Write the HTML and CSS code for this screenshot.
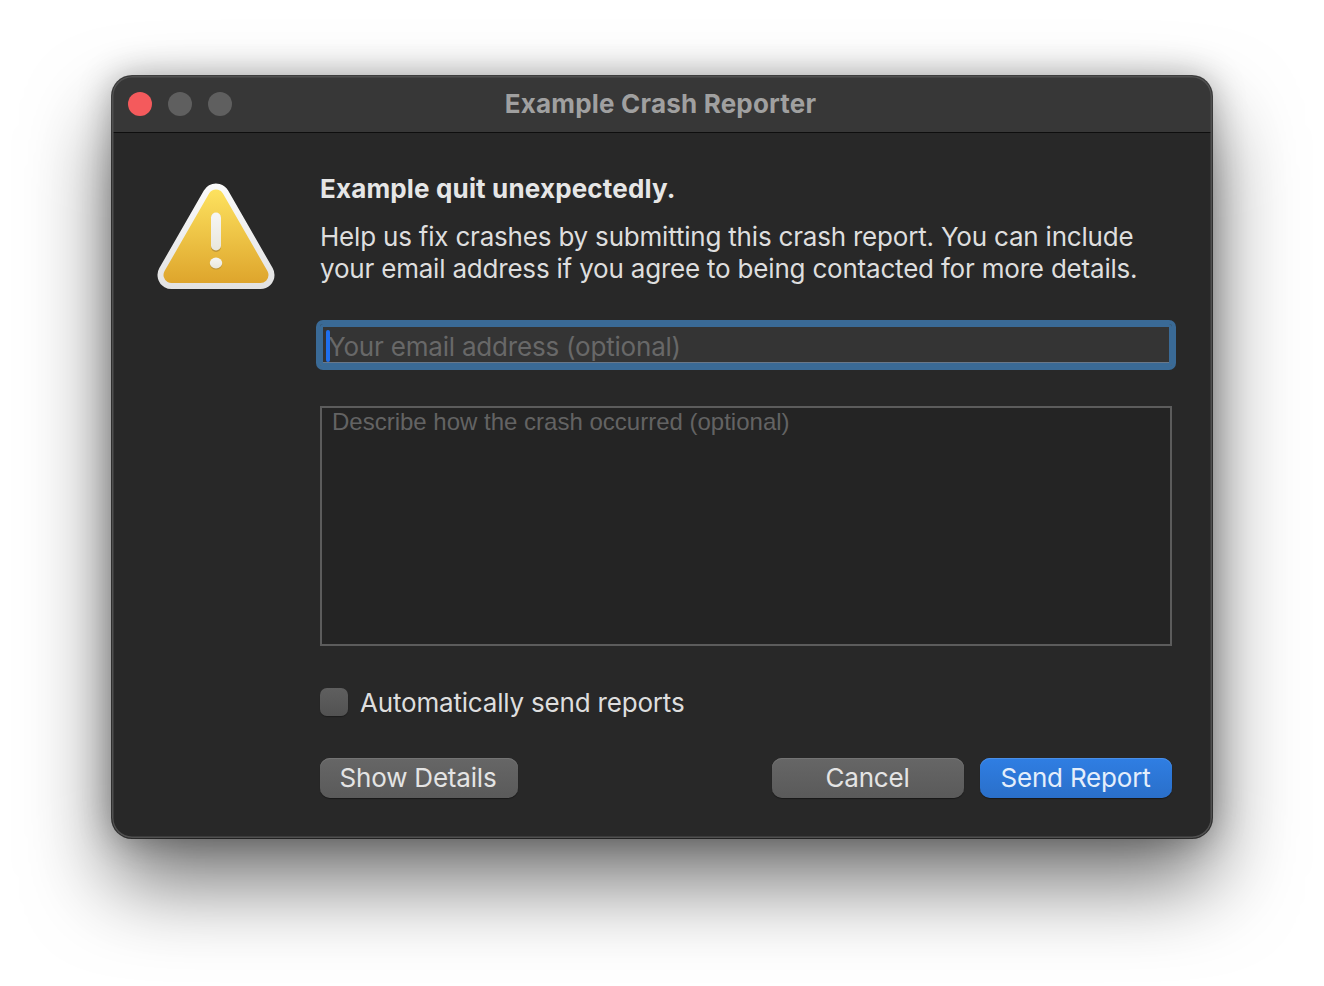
FILE: index.html
```html
<!DOCTYPE html>
<html lang="en">
<head>
<meta charset="utf-8">
<title>Example Crash Reporter</title>
<link rel="stylesheet" href="styles.css">
</head>
<body>
<div class="window">
  <header class="titlebar">
    <div class="lights">
      <span class="light light-close"></span>
      <span class="light"></span>
      <span class="light"></span>
    </div>
    <h1 class="title">Example Crash Reporter</h1>
  </header>
  <div class="content">
    <div class="icon-col">
      <svg class="warn" width="120" height="112" viewBox="0 0 120 112" aria-hidden="true">
        <defs>
          <linearGradient id="warnFill" gradientUnits="userSpaceOnUse" x1="0" y1="9" x2="0" y2="103">
            <stop offset="0" stop-color="#fde25f"/>
            <stop offset="1" stop-color="#dea52c"/>
          </linearGradient>
          <linearGradient id="warnEdge" gradientUnits="userSpaceOnUse" x1="0" y1="3" x2="0" y2="109">
            <stop offset="0" stop-color="#fbfbfb"/>
            <stop offset="1" stop-color="#e2e2e2"/>
          </linearGradient>
          <linearGradient id="warnMark" x1="0" y1="0" x2="0" y2="1">
            <stop offset="0" stop-color="#f6f6f4"/>
            <stop offset="1" stop-color="#e9e7dc"/>
          </linearGradient>
        </defs>
        <polygon points="60,17.5 15.5,95 104.5,95" fill="url(#warnEdge)" stroke="url(#warnEdge)" stroke-width="28" stroke-linejoin="round"/>
        <polygon points="60,17.5 15.5,95 104.5,95" fill="url(#warnFill)" stroke="url(#warnFill)" stroke-width="16" stroke-linejoin="round"/>
        <rect x="55" y="33" width="10" height="39" rx="5" fill="#bd9538"/>
        <rect x="55" y="32.5" width="10" height="38" rx="5" fill="url(#warnMark)"/>
        <ellipse cx="60" cy="84" rx="6.2" ry="5.6" fill="#bd9538"/>
        <ellipse cx="60" cy="83" rx="6.2" ry="5.4" fill="url(#warnMark)"/>
      </svg>
    </div>
    <main class="main">
      <h2 class="heading">Example quit unexpectedly.</h2>
      <p class="message">Help us fix crashes by submitting this crash report. You can include<br>your email address if you agree to being contacted for more details.</p>
      <div class="email">
        <span class="caret"></span>
        <span class="email-placeholder">Your email address (optional)</span>
      </div>
      <div class="describe">Describe how the crash occurred (optional)</div>
      <label class="auto">
        <span class="check"></span>
        <span class="auto-label">Automatically send reports</span>
      </label>
      <div class="actions">
        <button class="btn btn-details" type="button">Show Details</button>
        <span class="spacer"></span>
        <button class="btn btn-wide" type="button">Cancel</button>
        <button class="btn btn-wide btn-primary" type="button">Send Report</button>
      </div>
    </main>
  </div>
</div>
</body>
</html>
```
FILE: styles.css
```css
* { box-sizing: border-box; }
html, body { margin: 0; height: 100%; }
body {
  background: #fff;
  padding: 76px 112px 0;
  overflow: hidden;
  font-family: Inter, "Liberation Sans", sans-serif;
  -webkit-font-smoothing: antialiased;
}
.window {
  width: 1100px;
  height: 762px;
  background: #282828;
  border-radius: 20px;
  position: relative;
  box-shadow: 0 0 0 1px rgba(0,0,0,.7), 0 44px 84px rgba(0,0,0,.56), 0 0 34px rgba(0,0,0,.3);
  overflow: hidden;
  display: flex;
  flex-direction: column;
}
.window::after {
  content: "";
  position: absolute;
  inset: 0;
  border-radius: 20px;
  box-shadow: inset 0 0 0 1.5px #505050;
  pointer-events: none;
}
.titlebar {
  height: 57px;
  flex: none;
  position: relative;
  display: flex;
  align-items: center;
  justify-content: center;
  background: #373737;
  border-bottom: 1px solid #0e0e0e;
}
.lights {
  position: absolute;
  left: 16px;
  top: 16px;
  display: flex;
  gap: 16px;
}
.light { width: 24px; height: 24px; border-radius: 50%; background: #5f5f5f; }
.light-close { background: #f45a5c; }
.title {
  margin: 0 3px 1px 0;
  font-size: 26px;
  font-weight: 700;
  color: #a0a0a0;
  letter-spacing: 0.2px;
}
.content { flex: 1; display: flex; padding-left: 44px; padding-right: 40px; }
.icon-col { width: 164px; flex: none; padding-top: 47px; }
.warn { display: block; }
.main { flex: 1; padding-top: 40px; min-width: 0; }
.heading {
  margin: 0;
  font-size: 26px;
  line-height: 32px;
  font-weight: 700;
  color: #e6e6e6;
  letter-spacing: 0.16px;
}
.message {
  margin: 16px 0 0;
  font-size: 26px;
  line-height: 32px;
  color: #dedede;
  letter-spacing: -0.2px;
}
.email {
  margin-top: 39px;
  height: 42px;
  background: #343434;
  box-shadow: 0 0 0 4px #3a6a96, inset 0 0 0 3px #3a6a96, inset 0 -4px 0 #69788a;
  border-radius: 3px;
  position: relative;
  display: flex;
  align-items: center;
  padding: 2px 0 0 8px;
  font-size: 26px;
  color: #686868;
  letter-spacing: -0.2px;
}
.caret {
  position: absolute;
  left: 6px;
  top: 6px;
  width: 4px;
  height: 32px;
  border-radius: 2px;
  background: #1f6fee;
}
.describe {
  margin-top: 40px;
  height: 240px;
  border: 2px solid #5c5c5c;
  background: #242424;
  padding: 0 10px;
  font-family: "Liberation Sans", Arial, sans-serif;
  font-size: 24px;
  line-height: 28px;
  color: #636363;
}
.auto { margin-top: 42px; display: flex; align-items: center; gap: 12px; height: 28px; }
.check {
  width: 28px;
  height: 28px;
  border-radius: 7px;
  background: linear-gradient(#5f5f5f, #525252);
  box-shadow: 0 1px 1px rgba(0,0,0,.3);
}
.auto-label { font-size: 26px; color: #dedede; letter-spacing: -0.19px; }
.actions { margin-top: 42px; display: flex; gap: 16px; }
.spacer { flex: 1; }
.btn {
  height: 40px;
  border: 0;
  border-radius: 10px;
  padding: 0 1px 2px 0;
  font-family: inherit;
  font-size: 26px;
  color: #e4e4e4;
  letter-spacing: -0.2px;
  background: linear-gradient(#666, #5a5a5a);
  box-shadow: inset 0 1px 0 #747474, 0 1px 1px rgba(0,0,0,.4);
}
.btn-details { width: 198px; padding-right: 2px; }
.btn-wide { width: 192px; }
.btn-primary {
  background: linear-gradient(#2f7ee3, #2a6fc9);
  box-shadow: inset 0 1px 0 #4a8fe8, 0 1px 1px rgba(0,0,0,.4);
  color: #e4eefb;
}
```
